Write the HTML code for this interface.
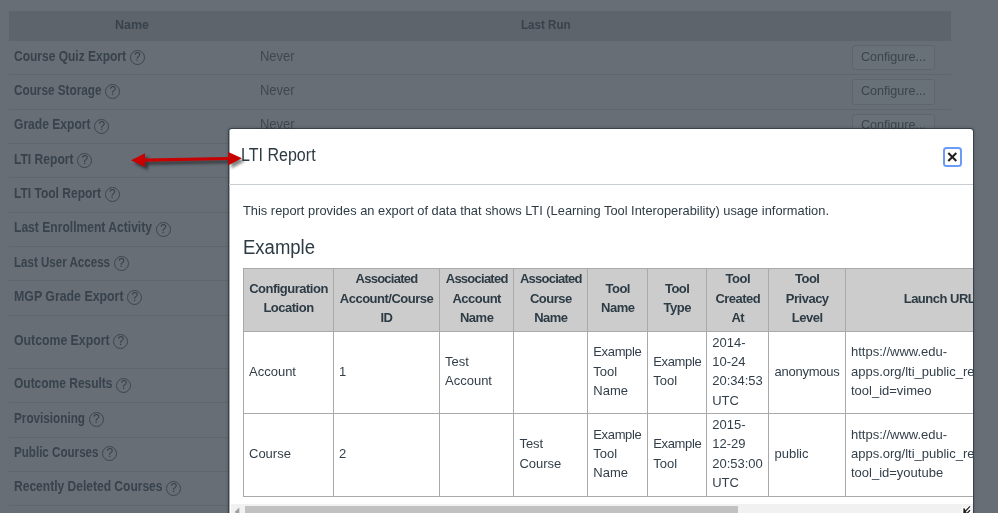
<!DOCTYPE html>
<html lang="en"><head><meta charset="utf-8"><title>LTI Report</title>
<style>
html,body{margin:0;padding:0}
html{background:#676e76}
body{will-change:transform;width:998px;height:513px;overflow:hidden;position:relative;background:#676e76;font-family:"Liberation Sans", sans-serif;color:#38424c}
.abs{position:absolute}
.t{position:absolute;white-space:nowrap;transform-origin:0 50%;line-height:20px;height:20px}
.nm{font-weight:bold;font-size:14px;color:#38424c}
.ln{position:absolute;left:9.3px;width:941.7px;height:1px;background:#5f666e}
.q{position:absolute;width:13px;height:13px;border:1px solid #3c4650;border-radius:50%;font-size:12px;line-height:13.5px;text-align:center;color:#343e48}
.btn{position:absolute;left:852px;width:81px;height:23.4px;border:1px solid #5d656d;border-radius:3px;background:#687078}
.btn span{position:absolute;left:7.5px;top:0.8px;font-size:13px;line-height:20px;color:#3b444d;white-space:nowrap;transform-origin:0 50%}
.nv{font-size:14px;color:#3f4851}
#modal{position:absolute;left:229px;top:128.5px;width:744px;height:400px;background:#fff;border-radius:3px 3px 0 0;box-shadow:0 0 0 1px rgba(38,48,58,.6),0 0 3px 1px rgba(20,30,40,.3);overflow:hidden;color:#2d3b45}
#modal .t{color:#2d3b45}
table{border-collapse:collapse;table-layout:fixed;position:absolute;left:14px;top:139.5px;font-size:13px;line-height:19.35px;color:#2d3b45}
th,td{border:1px solid #a9a9a9;padding:2px 5px;white-space:nowrap;overflow:visible}
th{background:#cccccc;font-weight:bold;text-align:center;letter-spacing:-0.5px;height:58px}
td{color:#323f4a;text-align:left;height:77.4px}
th div{position:relative;top:-1.8px}td div{position:relative;top:-1.4px}.ex{letter-spacing:-0.35px}
</style></head><body>

<div class="abs" style="left:9.3px;top:11px;width:941.7px;height:29.5px;background:#5d646c"></div>
<div class="t nm" style="left:115.20px;top:15.10px;transform:scaleX(0.9599);font-size:13px;">Name</div>
<div class="t nm" style="left:521.00px;top:15.10px;transform:scaleX(0.8917);font-size:13px;">Last Run</div>
<div class="ln" style="top:74.0px"></div>
<div class="ln" style="top:108.5px"></div>
<div class="ln" style="top:143.0px"></div>
<div class="ln" style="top:177.3px"></div>
<div class="ln" style="top:211.7px"></div>
<div class="ln" style="top:246.0px"></div>
<div class="ln" style="top:280.3px"></div>
<div class="ln" style="top:315.0px"></div>
<div class="ln" style="top:367.7px"></div>
<div class="ln" style="top:402.0px"></div>
<div class="ln" style="top:436.8px"></div>
<div class="ln" style="top:471.0px"></div>
<div class="ln" style="top:505.3px"></div>
<div class="t nm" style="left:14.00px;top:45.50px;transform:scaleX(0.8570);">Course Quiz Export</div>
<div class="q" style="left:129.8px;top:49.7px">?</div>
<div class="t nm" style="left:14.00px;top:80.00px;transform:scaleX(0.8393);">Course Storage</div>
<div class="q" style="left:105.3px;top:84.2px">?</div>
<div class="t nm" style="left:14.00px;top:114.30px;transform:scaleX(0.8624);">Grade Export</div>
<div class="q" style="left:94.3px;top:118.5px">?</div>
<div class="t nm" style="left:14.00px;top:148.60px;transform:scaleX(0.8627);">LTI Report</div>
<div class="q" style="left:77.3px;top:152.8px">?</div>
<div class="t nm" style="left:14.00px;top:183.00px;transform:scaleX(0.8583);">LTI Tool Report</div>
<div class="q" style="left:104.8px;top:187.2px">?</div>
<div class="t nm" style="left:14.00px;top:217.30px;transform:scaleX(0.8638);">Last Enrollment Activity</div>
<div class="q" style="left:155.8px;top:221.5px">?</div>
<div class="t nm" style="left:14.00px;top:251.50px;transform:scaleX(0.8260);">Last User Access</div>
<div class="q" style="left:113.8px;top:255.7px">?</div>
<div class="t nm" style="left:14.00px;top:285.80px;transform:scaleX(0.8815);">MGP Grade Export</div>
<div class="q" style="left:127.3px;top:290.0px">?</div>
<div class="t nm" style="left:14.00px;top:329.60px;transform:scaleX(0.8769);">Outcome Export</div>
<div class="q" style="left:113.3px;top:333.8px">?</div>
<div class="t nm" style="left:14.00px;top:373.30px;transform:scaleX(0.8555);">Outcome Results</div>
<div class="q" style="left:116.3px;top:377.5px">?</div>
<div class="t nm" style="left:14.00px;top:408.00px;transform:scaleX(0.8373);">Provisioning</div>
<div class="q" style="left:88.8px;top:412.2px">?</div>
<div class="t nm" style="left:14.00px;top:442.00px;transform:scaleX(0.8291);">Public Courses</div>
<div class="q" style="left:102.3px;top:446.2px">?</div>
<div class="t nm" style="left:14.00px;top:476.30px;transform:scaleX(0.8597);">Recently Deleted Courses</div>
<div class="q" style="left:166.3px;top:480.5px">?</div>
<div class="t nv" style="left:259.90px;top:45.50px;transform:scaleX(0.9261);">Never</div>
<div class="btn" style="top:44.9px"><span style="transform:scaleX(0.9672)">Configure...</span></div>
<div class="t nv" style="left:259.90px;top:80.00px;transform:scaleX(0.9261);">Never</div>
<div class="btn" style="top:79.4px"><span style="transform:scaleX(0.9672)">Configure...</span></div>
<div class="t nv" style="left:259.90px;top:114.30px;transform:scaleX(0.9261);">Never</div>
<div class="btn" style="top:113.7px"><span style="transform:scaleX(0.9672)">Configure...</span></div>
<div id="modal">
<div class="abs" style="left:0;top:0;width:1px;height:400px;background:rgba(61,70,80,.45)"></div>
<div class="t " style="left:11.60px;top:16.70px;transform:scaleX(0.9167);font-size:17.5px;">LTI Report</div>
<div class="abs" style="left:713.6px;top:18.5px;width:15.3px;height:15.5px;border:2px solid #6a9cf7;border-radius:3.5px;background:#fff"></div>
<svg class="abs" style="left:718.4px;top:23.4px" width="10" height="10" viewBox="0 0 10 10"><path d="M1.3 1 L9.3 9 M9.3 1 L1.3 9" stroke="#1f1f1f" stroke-width="2" fill="none" stroke-linecap="butt"/></svg>
<div class="abs" style="left:0;top:55.5px;width:744px;height:1px;background:#c7cdd1"></div>
<div class="t " style="left:14.00px;top:72.90px;transform:scaleX(0.9885);font-size:13px;">This report provides an export of data that shows LTI (Learning Tool Interoperability) usage information.</div>
<div class="t " style="left:14.00px;top:108.80px;transform:scaleX(0.9489);font-size:19.5px;">Example</div>
<table style="width:910.0px"><colgroup><col style="width:90px"><col style="width:106px"><col style="width:74.4px"><col style="width:73.9px"><col style="width:59.9px"><col style="width:59.05px"><col style="width:62.25px"><col style="width:76.5px"><col style="width:188px"><col style="width:120px"></colgroup>
<tr><th><div>Configuration<br>Location</div></th><th><div><span style="letter-spacing:-0.75px">Associated</span><br>Account/Course<br>ID</div></th><th><div><span style="letter-spacing:-0.75px">Associated</span><br>Account<br>Name</div></th><th><div><span style="letter-spacing:-0.75px">Associated</span><br>Course<br>Name</div></th><th><div>Tool<br>Name</div></th><th><div>Tool<br>Type</div></th><th><div>Tool<br>Created<br>At</div></th><th><div>Tool<br>Privacy<br>Level</div></th><th><div>Launch URL</div></th><th><div>Custom<br>Fields</div></th></tr>
<tr><td><div>Account</div></td><td><div>1</div></td><td><div>Test<br>Account</div></td><td><div></div></td><td><div><span class=ex>Example</span><br>Tool<br>Name</div></td><td><div><span class=ex>Example</span><br>Tool</div></td><td><div>2014-<br>10-24<br>20:34:53<br>UTC</div></td><td><div><span style="letter-spacing:-0.25px">anonymous</span></div></td><td><div>https://www.edu-<br>apps.org/lti_public_resources/?<br>tool_id=vimeo</div></td><td><div></div></td></tr>
<tr><td><div>Course</div></td><td><div>2</div></td><td><div></div></td><td><div>Test<br>Course</div></td><td><div><span class=ex>Example</span><br>Tool<br>Name</div></td><td><div><span class=ex>Example</span><br>Tool</div></td><td><div>2015-<br>12-29<br>20:53:00<br>UTC</div></td><td><div>public</div></td><td><div>https://www.edu-<br>apps.org/lti_public_resources/?<br>tool_id=youtube</div></td><td><div></div></td></tr>
</table>
<div class="abs" style="left:2.3px;top:375.5px;width:742px;height:30px;background:#f1f1f1"></div>
<div class="abs" style="left:16.2px;top:377.4px;width:493.3px;height:30px;background:#c1c1c1"></div>
<svg class="abs" style="left:4px;top:376px" width="10" height="12" viewBox="233 504.5 10 12"><path d="M239.3 506.9 L239.3 516 L234.7 511.4 Z" fill="#a0a0a0"/></svg>
<svg class="abs" style="left:730px;top:374.5px" width="14" height="12" viewBox="959 503 14 12"><g stroke="#fff" stroke-width="3.2" fill="#fff" stroke-linejoin="round"><path d="M970 506.4 L964 512.6"/><path d="M970 510.2 L967.2 513.2"/><path d="M963.5 508.4 L964.4 508.4 L967 513.5 L963.5 513.5 Z"/></g><g stroke="#1e1e1e" stroke-width="1.25" fill="none"><path d="M970 506.4 L964 512.6"/><path d="M970 510.2 L967.2 513.2"/></g><path d="M963.4 508.3 L964.5 508.3 L967 513.5 L963.4 513.5 Z" fill="#1e1e1e"/></svg>
</div>
<svg class="abs" style="left:120px;top:140px;filter:drop-shadow(3px 3px 1.5px rgba(0,0,0,.5))" width="140" height="40" viewBox="120 140 140 40">
<path d="M131 160.3 L145 153.3 L145 158.6 L228.3 156.9 L228.3 152 L241.8 158.2 L228.3 165.3 L228.3 160.1 L145 161.8 L145 167 Z" fill="#c80000"/></svg>
</body></html>
